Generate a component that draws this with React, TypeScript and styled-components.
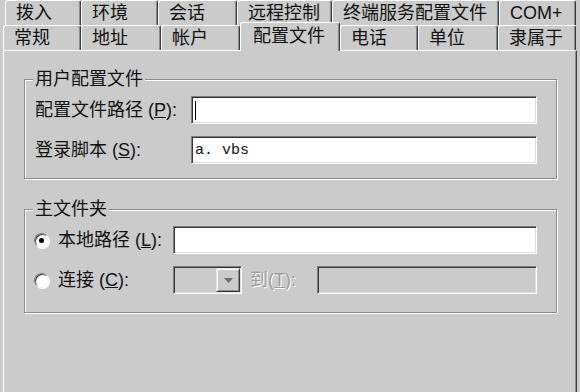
import React from 'react'
import styled, { createGlobalStyle } from 'styled-components'

const GlobalStyle = createGlobalStyle`
  html, body {
    margin: 0;
    padding: 0;
    background: #cbcbcb;
  }
  body {
    font-family: "Liberation Sans", "Noto Sans CJK SC", sans-serif;
  }
`

const Window = styled.div`
  width: 580px;
  height: 392px;
  overflow: hidden;
  background: #cbcbcb;
  display: flex;
  flex-direction: column;
  font-size: 18px;
  color: #111;
`

const TabRows = styled.div`
  display: flex;
  flex-direction: column;
  padding-left: 3px;
`

const TabRow = styled.div<{ $indent?: number }>`
  display: flex;
  height: 25px;
  align-items: flex-start;
  margin-left: ${p => p.$indent ?? 0}px;
`

const Tab = styled.div<{ $w: number; $active?: boolean }>`
  position: relative;
  z-index: ${p => (p.$active ? 2 : 1)};
  box-sizing: border-box;
  width: ${p => p.$w}px;
  height: ${p => (p.$active ? 29 : 25)}px;
  margin-top: ${p => (p.$active ? -3 : 0)}px;
  padding: ${p => (p.$active ? '1px 0 0 12px' : '0 0 0 10px')};
  border-top: 1px solid #fff;
  border-left: 1px solid #fff;
  border-right: 1px solid #3a3a3a;
  border-radius: 3px 3px 0 0;
  box-shadow: inset -1px 0 0 #8a8a8a;
  background: #cbcbcb;
  line-height: 25px;
  white-space: nowrap;
`

const Panel = styled.div`
  flex: 1;
  margin-left: 3px;
  width: 574px;
  box-sizing: border-box;
  border-top: 1px solid #fff;
  border-left: 1px solid #fff;
  border-right: 1px solid #3a3a3a;
  box-shadow: inset -1px 0 0 #8a8a8a;
  padding: 17px 19px 0 20px;
  display: flex;
  flex-direction: column;
  gap: 19px;
`

const Group = styled.fieldset<{ $padBottom: number }>`
  margin: 0;
  min-width: 0;
  padding: 6px 19px ${p => p.$padBottom}px 10px;
  border: 1px solid #8a8a8a;
  box-shadow: 1px 1px 0 #fff, inset 1px 1px 0 #fff;
`

const GroupTitle = styled.legend`
  padding: 0 2px;
  margin-left: -2px;
  line-height: 22px;
  background: #cbcbcb;
`

const FieldGrid = styled.div`
  display: grid;
  grid-template-columns: 156px 1fr;
  row-gap: 12px;
  align-items: center;
`

const OptionList = styled.div`
  display: flex;
  flex-direction: column;
  gap: 12px;
`

const OptionRow = styled.div`
  display: flex;
  align-items: center;
`

const Label = styled.span<{ $w?: number; $disabled?: boolean }>`
  width: ${p => (p.$w ? `${p.$w}px` : 'auto')};
  flex: none;
  white-space: nowrap;
  line-height: 22px;
  color: ${p => (p.$disabled ? '#9c9c9c' : 'inherit')};
  text-shadow: ${p => (p.$disabled ? '1px 1px 0 #fff' : 'none')};
`

const TextBox = styled.div<{ $disabled?: boolean; $w?: number }>`
  box-sizing: border-box;
  height: 28px;
  flex: ${p => (p.$w ? 'none' : '1')};
  width: ${p => (p.$w ? `${p.$w}px` : 'auto')};
  position: relative;
  display: flex;
  align-items: center;
  padding: 0 3px;
  background: ${p => (p.$disabled ? '#cbcbcb' : '#fff')};
  border: 1px solid;
  border-color: #7e7e7e #fff #fff #7e7e7e;
  box-shadow: inset 1px 1px 0 #363636, inset -1px -1px 0 #dedede;
  font-family: "Liberation Mono", monospace;
  font-size: 15px;
  color: #111;
`

const Caret = styled.span`
  width: 1px;
  height: 19px;
  background: #000;
`

const DropButton = styled.div`
  position: absolute;
  top: 1px;
  right: 1px;
  width: 24px;
  height: 24px;
  box-sizing: border-box;
  display: flex;
  align-items: center;
  justify-content: center;
  background: #cbcbcb;
  border: 1px solid;
  border-color: #e6e6e6 #3a3a3a #3a3a3a #e6e6e6;
  box-shadow: inset 1px 1px 0 #fff, inset -1px -1px 0 #8a8a8a;
`

const Radio = styled.span<{ $checked?: boolean }>`
  position: relative;
  flex: none;
  width: 15px;
  height: 15px;
  box-sizing: border-box;
  margin-left: -1px;
  margin-right: 9px;
  border-radius: 50%;
  background: #fff;
  border: 1px solid;
  border-color: #7e7e7e #f4f4f4 #f4f4f4 #7e7e7e;
  box-shadow: inset 1px 1px 0 #3a3a3a, 1px 1px 0 #fff;

  &::after {
    content: '';
    display: ${p => (p.$checked ? 'block' : 'none')};
    position: absolute;
    left: 4px;
    top: 4px;
    width: 5px;
    height: 5px;
    border-radius: 50%;
    background: #000;
  }
`

const Spacer = styled.span<{ $w: number }>`
  flex: none;
  width: ${p => p.$w}px;
`

const topTabs = [
  { label: '拨入', w: 76 },
  { label: '环境', w: 77 },
  { label: '会话', w: 79 },
  { label: '远程控制', w: 95 },
  { label: '终端服务配置文件', w: 167 },
  { label: 'COM+', w: 77 },
]

const frontTabs = [
  { label: '常规', w: 78 },
  { label: '地址', w: 80 },
  { label: '帐户', w: 79 },
  { label: '配置文件', w: 100, active: true },
  { label: '电话', w: 78 },
  { label: '单位', w: 80 },
  { label: '隶属于', w: 78 },
]

export default function App() {
  return (
    <>
      <GlobalStyle />
      <Window>
        <TabRows>
          <TabRow $indent={2}>
            {topTabs.map(t => (
              <Tab key={t.label} $w={t.w}>{t.label}</Tab>
            ))}
          </TabRow>
          <TabRow>
            {frontTabs.map(t => (
              <Tab key={t.label} $w={t.w} $active={t.active}>{t.label}</Tab>
            ))}
          </TabRow>
        </TabRows>

        <Panel>
          <Group $padBottom={14}>
            <GroupTitle>用户配置文件</GroupTitle>
            <FieldGrid>
              <Label>配置文件路径 (<u>P</u>):</Label>
              <TextBox><Caret /></TextBox>
              <Label>登录脚本 (<u>S</u>):</Label>
              <TextBox>a. vbs</TextBox>
            </FieldGrid>
          </Group>

          <Group $padBottom={18}>
            <GroupTitle>主文件夹</GroupTitle>
            <OptionList>
              <OptionRow>
                <Radio $checked />
                <Label $w={115}>本地路径 (<u>L</u>):</Label>
                <TextBox />
              </OptionRow>
              <OptionRow>
                <Radio />
                <Label $w={115}>连接 (<u>C</u>):</Label>
                <TextBox $disabled $w={69}>
                  <DropButton>
                    <svg width="9" height="5" viewBox="0 0 9 5">
                      <path d="M0 0h9L4.5 5z" fill="#6e6e6e" />
                    </svg>
                  </DropButton>
                </TextBox>
                <Spacer $w={8} />
                <Label $w={67} $disabled>到(<u>T</u>):</Label>
                <TextBox $disabled />
              </OptionRow>
            </OptionList>
          </Group>
        </Panel>
      </Window>
    </>
  )
}
